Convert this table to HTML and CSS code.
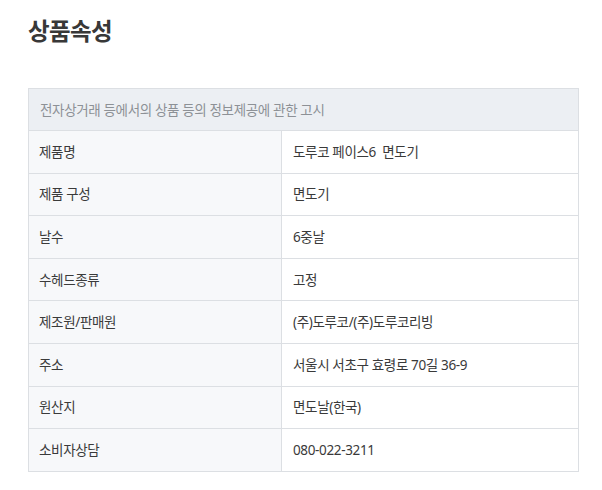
FILE: index.html
```html
<!DOCTYPE html>
<html lang="ko">
<head>
<meta charset="utf-8">
<title>상품속성</title>
<link rel="stylesheet" href="styles.css">
</head>
<body>
<section class="attrs">
  <h2 class="attrs-title">상품속성</h2>
  <table class="attrs-table">
    <colgroup>
      <col class="col-label">
      <col class="col-value">
    </colgroup>
    <thead>
      <tr><th colspan="2" class="attrs-caption">전자상거래 등에서의 상품 등의 정보제공에 관한 고시</th></tr>
    </thead>
    <tbody>
      <tr><th>제품명</th><td>도루코 페이스6&nbsp; 면도기</td></tr>
      <tr><th>제품 구성</th><td>면도기</td></tr>
      <tr><th>날수</th><td>6중날</td></tr>
      <tr><th>수헤드종류</th><td>고정</td></tr>
      <tr><th>제조원/판매원</th><td>(주)도루코/(주)도루코리빙</td></tr>
      <tr><th>주소</th><td>서울시 서초구 효령로 70길 36-9</td></tr>
      <tr><th>원산지</th><td>면도날(한국)</td></tr>
      <tr><th>소비자상담</th><td>080-022-3211</td></tr>
    </tbody>
  </table>
</section>
</body>
</html>
```
FILE: styles.css
```css
html, body {
  margin: 0;
  padding: 0;
  background: #ffffff;
}

body {
  font-family: "Noto Sans", "Noto Sans CJK KR", sans-serif;
  color: #333333;
}

.attrs {
  padding: 13px 24px 0 28px;
}

.attrs-title {
  margin: 0 0 41px 0;
  font-family: "Noto Sans CJK KR", sans-serif;
  font-size: 23.5px;
  font-weight: 700;
  line-height: 34px;
  color: #383838;
  letter-spacing: -0.6px;
}

.attrs-table {
  width: 550px;
  border-collapse: collapse;
  table-layout: fixed;
  font-size: 13.5px;
  letter-spacing: -0.35px;
}

.col-label {
  width: 253px;
}

.col-value {
  width: 297px;
}

.attrs-table tr {
  height: 42.6px;
}

.attrs-table th,
.attrs-table td {
  border: 1px solid #dcdfe3;
  padding: 0 10px;
  line-height: 18px;
  text-align: left;
  font-weight: 400;
  vertical-align: middle;
}

.attrs-table thead tr {
  height: 42px;
}

.attrs-table .attrs-caption {
  background: #eceff3;
  color: #8d9196;
  padding-left: 11px;
}

.attrs-table tbody th {
  background: #f7f8fa;
  color: #3a3a3a;
}

.attrs-table tbody td {
  background: #ffffff;
  color: #3a3a3a;
  padding-left: 11px;
}
```
